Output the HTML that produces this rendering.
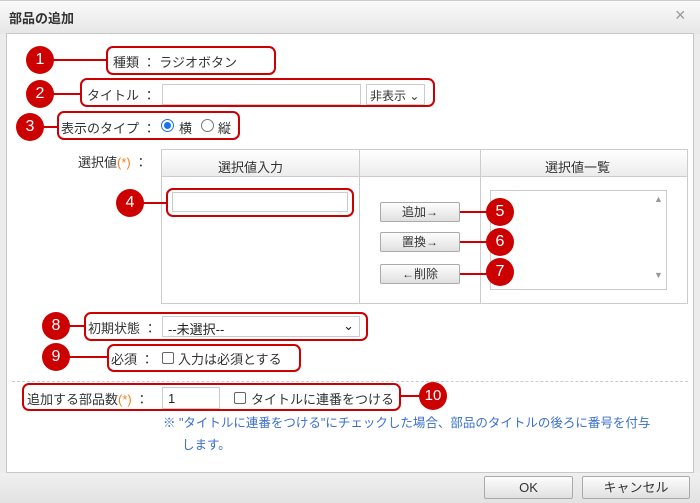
<!DOCTYPE html>
<html><head><meta charset="utf-8"><style>
*{box-sizing:border-box;margin:0;padding:0}
body{width:700px;height:503px;position:relative;overflow:hidden;background:#ececec;font-family:"Liberation Sans","Noto Sans CJK JP",sans-serif;font-size:13px;color:#333}
.a{position:absolute}
.title{left:0;top:0;width:700px;height:34px;background:linear-gradient(#fafafa,#e6e6e6);border-top:1px solid #ccc}
.panel{left:6px;top:33px;width:688px;height:440px;background:#fff;border:1px solid #c8c8c8}
.foot{left:0;top:473px;width:700px;height:30px;background:linear-gradient(#f0f0f0,#e2e2e2)}
.badge{width:28px;height:28px;border-radius:50%;background:#c00;color:#fff;font-size:16px;text-align:center;line-height:28px;z-index:5}
.box{border:2px solid #c00;border-radius:7px}
.ln{height:2px;background:#c00}
.inp{border:1px solid #ccc;background:#fff}
.btn{border:1px solid #aaa;border-radius:2px;background:linear-gradient(#fdfdfd,#e0e0e0);text-align:center;font-size:12px;line-height:18px}
.t{white-space:nowrap}
.star{color:#f08020}
.cb{width:12px;height:12px;border:1px solid #666;border-radius:2px;background:#fff}
</style></head><body>
<div class="a title"></div>
<div class="a t" style="left:9px;top:8px;font-size:13px;font-weight:bold;color:#333">部品の追加</div>
<div class="a t" style="left:675px;top:5px;font-size:18px;color:#999">×</div>
<div class="a panel"></div>
<div class="a foot"></div>
<div class="a btn" style="left:484px;top:476px;width:89px;height:23px;line-height:21px;font-size:13px">OK</div>
<div class="a btn" style="left:582px;top:476px;width:108px;height:23px;line-height:21px;font-size:13px">キャンセル</div>

<!-- 1 -->
<div class="a ln" style="left:50px;top:59px;width:57px"></div>
<div class="a badge" style="left:26px;top:46px">1</div>
<div class="a box" style="left:106px;top:46px;width:170px;height:29px"></div>
<div class="a t" style="left:113px;top:52px">種類 ：&nbsp;ラジオボタン</div>
<!-- 2 -->
<div class="a ln" style="left:50px;top:93px;width:31px"></div>
<div class="a badge" style="left:26px;top:80px">2</div>
<div class="a box" style="left:80px;top:78px;width:355px;height:29px"></div>
<div class="a t" style="left:87px;top:85px">タイトル ：</div>
<div class="a inp" style="left:162px;top:84px;width:199px;height:21px"></div>
<div class="a inp" style="left:366px;top:84px;width:59px;height:21px;padding:2px 3px;font-size:12px">非表示 ⌄</div>
<!-- 3 -->
<div class="a ln" style="left:40px;top:126px;width:18px"></div>
<div class="a badge" style="left:16px;top:113px">3</div>
<div class="a box" style="left:57px;top:111px;width:183px;height:29px"></div>
<div class="a t" style="left:61px;top:118px">表示のタイプ ：</div>
<div class="a" style="left:161px;top:119px;width:13px;height:13px;border:1px solid #1a73e8;border-radius:50%;background:#fff"><div style="margin:2px;width:7px;height:7px;border-radius:50%;background:#1a73e8"></div></div>
<div class="a t" style="left:179px;top:118px">横</div>
<div class="a" style="left:201px;top:119px;width:13px;height:13px;border:1px solid #777;border-radius:50%"></div>
<div class="a t" style="left:218px;top:118px">縦</div>

<!-- table -->
<div class="a t" style="left:78px;top:152px">選択値<span class="star">(*)</span> ：</div>
<div class="a" style="left:161px;top:149px;width:527px;height:155px;border:1px solid #ccc"></div>
<div class="a" style="left:162px;top:150px;width:525px;height:27px;background:linear-gradient(#fff,#ececec);border-bottom:1px solid #ccc"></div>
<div class="a" style="left:359px;top:150px;width:1px;height:154px;background:#ccc"></div>
<div class="a" style="left:480px;top:150px;width:1px;height:154px;background:#ccc"></div>
<div class="a t" style="left:218px;top:157px">選択値入力</div>
<div class="a t" style="left:545px;top:157px">選択値一覧</div>
<!-- 4 -->
<div class="a ln" style="left:140px;top:202px;width:28px"></div>
<div class="a badge" style="left:116px;top:189px">4</div>
<div class="a box" style="left:166px;top:188px;width:188px;height:29px"></div>
<div class="a inp" style="left:172px;top:192px;width:176px;height:20px"></div>
<!-- buttons -->
<div class="a inp" style="left:490px;top:190px;width:177px;height:100px"></div>
<div class="a" style="left:654px;top:194px;font-size:9px;color:#999">▲</div>
<div class="a" style="left:654px;top:270px;font-size:9px;color:#999">▼</div>
<div class="a btn" style="left:380px;top:202px;width:80px;height:20px">追加→</div>
<div class="a btn" style="left:380px;top:232px;width:80px;height:20px">置換→</div>
<div class="a btn" style="left:380px;top:264px;width:80px;height:20px">←削除</div>
<div class="a ln" style="left:460px;top:211px;width:30px"></div>
<div class="a ln" style="left:460px;top:241px;width:30px"></div>
<div class="a ln" style="left:460px;top:273px;width:30px"></div>
<div class="a badge" style="left:486px;top:198px">5</div>
<div class="a badge" style="left:486px;top:228px">6</div>
<div class="a badge" style="left:486px;top:258px">7</div>

<!-- 8 -->
<div class="a ln" style="left:66px;top:325px;width:20px"></div>
<div class="a badge" style="left:42px;top:312px">8</div>
<div class="a box" style="left:84px;top:312px;width:284px;height:29px"></div>
<div class="a t" style="left:88px;top:318px">初期状態 ：</div>
<div class="a inp" style="left:162px;top:316px;width:198px;height:21px;padding:2px 5px;color:#222">--未選択--<span style="position:absolute;right:5px;top:1px">⌄</span></div>
<!-- 9 -->
<div class="a ln" style="left:66px;top:356px;width:42px"></div>
<div class="a badge" style="left:42px;top:343px">9</div>
<div class="a box" style="left:107px;top:344px;width:194px;height:28px"></div>
<div class="a t" style="left:111px;top:349px">必須 ：</div>
<div class="a cb" style="left:162px;top:352px"></div>
<div class="a t" style="left:178px;top:349px">入力は必須とする</div>
<div class="a" style="left:12px;top:381px;width:676px;border-top:1px dashed #ccc"></div>
<!-- 10 -->
<div class="a box" style="left:22px;top:383px;width:379px;height:28px"></div>
<div class="a ln" style="left:400px;top:395px;width:20px"></div>
<div class="a badge" style="left:419px;top:382px;font-size:15px">10</div>
<div class="a t" style="left:27px;top:389px">追加する部品数<span class="star">(*)</span> ：</div>
<div class="a inp" style="left:162px;top:387px;width:58px;height:22px;padding:3px 5px;color:#222">1</div>
<div class="a cb" style="left:234px;top:392px"></div>
<div class="a t" style="left:251px;top:389px">タイトルに連番をつける</div>
<div class="a t" style="left:163px;top:412px;color:#3a6fd0;font-size:12.5px">※ "タイトルに連番をつける"にチェックした場合、部品のタイトルの後ろに番号を付与</div>
<div class="a t" style="left:182px;top:434px;color:#3a6fd0;font-size:12.5px">します。</div>
</body></html>
